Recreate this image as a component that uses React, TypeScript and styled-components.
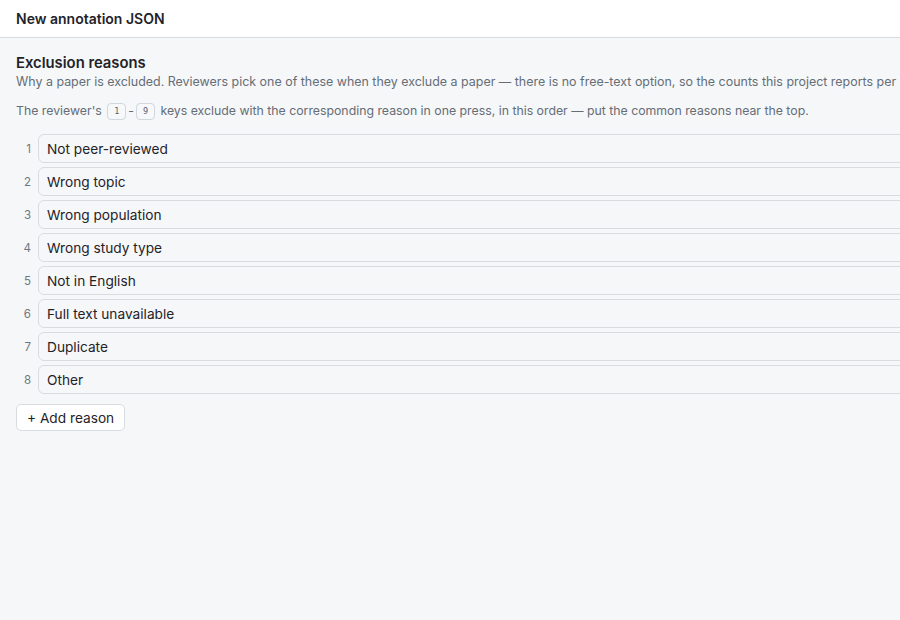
import React from 'react';
import styled, { createGlobalStyle } from 'styled-components';

const GlobalStyle = createGlobalStyle`
  html, body {
    margin: 0;
    padding: 0;
    background: #f6f7f9;
    overflow: hidden;
  }
  body {
    font-family: Inter, "Liberation Sans", Arial, sans-serif;
    color: #1f2328;
  }
`;

const Page = styled.div`
  width: 1120px;
  min-height: 620px;
  background: #f6f7f9;
`;

const Header = styled.header`
  height: 38px;
  box-sizing: border-box;
  background: #fff;
  border-bottom: 1px solid #d8dce1;
  display: flex;
  align-items: center;
  padding: 0 16px;
  font-size: 14px;
  font-weight: 600;
`;

const Section = styled.section`
  padding: 16px 16px;
  display: flex;
  flex-direction: column;
`;

const Title = styled.h2`
  margin: 0;
  font-size: 14.8px;
  font-weight: 600;
  line-height: 18px;
`;

const Desc = styled.p<{ $small?: boolean }>`
  margin: ${(p) => (p.$small ? '11px 0 0' : '1px 0 0')};
  font-size: ${(p) => (p.$small ? '12.3px' : '12.45px')};
  line-height: 18px;
  color: #656d76;
  white-space: nowrap;
  display: flex;
  align-items: center;
`;

const Kbd = styled.kbd`
  display: inline-flex;
  align-items: center;
  justify-content: center;
  box-sizing: border-box;
  height: 17px;
  min-width: 19px;
  padding: 0 5px;
  margin: 0 2px;
  border: 1px solid #d0d7de;
  border-radius: 4px;
  background: #f6f8fa;
  font-family: "DejaVu Sans Mono", "Liberation Mono", monospace;
  font-size: 8.5px;
  color: #57606a;
`;

const List = styled.ol`
  list-style: none;
  margin: 14px 0 0;
  padding: 0;
  display: flex;
  flex-direction: column;
  gap: 4px;
`;

const Row = styled.li`
  display: flex;
  align-items: center;
  gap: 7px;
`;

const Num = styled.span`
  width: 15px;
  text-align: right;
  font-size: 11.5px;
  color: #6e7781;
`;

const ReasonInput = styled.input`
  flex: 1;
  height: 29px;
  box-sizing: border-box;
  border: 1px solid #d8dce1;
  border-radius: 6px;
  background: #f6f7f9;
  padding: 0 8px;
  font-family: inherit;
  font-size: 13.7px;
  color: #1f2328;
  outline: none;
`;

const AddButton = styled.button`
  align-self: flex-start;
  margin-top: 10px;
  height: 27px;
  padding: 0 10px;
  background: #fff;
  border: 1px solid #d8dce1;
  border-radius: 5px;
  font-family: inherit;
  font-size: 13.7px;
  color: #1f2328;
  cursor: pointer;
`;

const reasons = [
  'Not peer-reviewed',
  'Wrong topic',
  'Wrong population',
  'Wrong study type',
  'Not in English',
  'Full text unavailable',
  'Duplicate',
  'Other',
];

const App: React.FC = () => {
  return (
    <Page>
      <GlobalStyle />
      <Header>New annotation JSON</Header>
      <Section>
        <Title>Exclusion reasons</Title>
        <Desc>
          Why a paper is excluded. Reviewers pick one of these when they exclude a paper — there is no
          free-text option, so the counts this project reports per reason add up to the total excluded.
        </Desc>
        <Desc $small>
          The reviewer's&nbsp;<Kbd>1</Kbd>-<Kbd>9</Kbd>&nbsp;keys exclude with the corresponding reason in
          one press, in this order — put the common reasons near the top.
        </Desc>
        <List>
          {reasons.map((r, i) => (
            <Row key={r}>
              <Num>{i + 1}</Num>
              <ReasonInput defaultValue={r} />
            </Row>
          ))}
        </List>
        <AddButton>+ Add reason</AddButton>
      </Section>
    </Page>
  );
};

export default App;
